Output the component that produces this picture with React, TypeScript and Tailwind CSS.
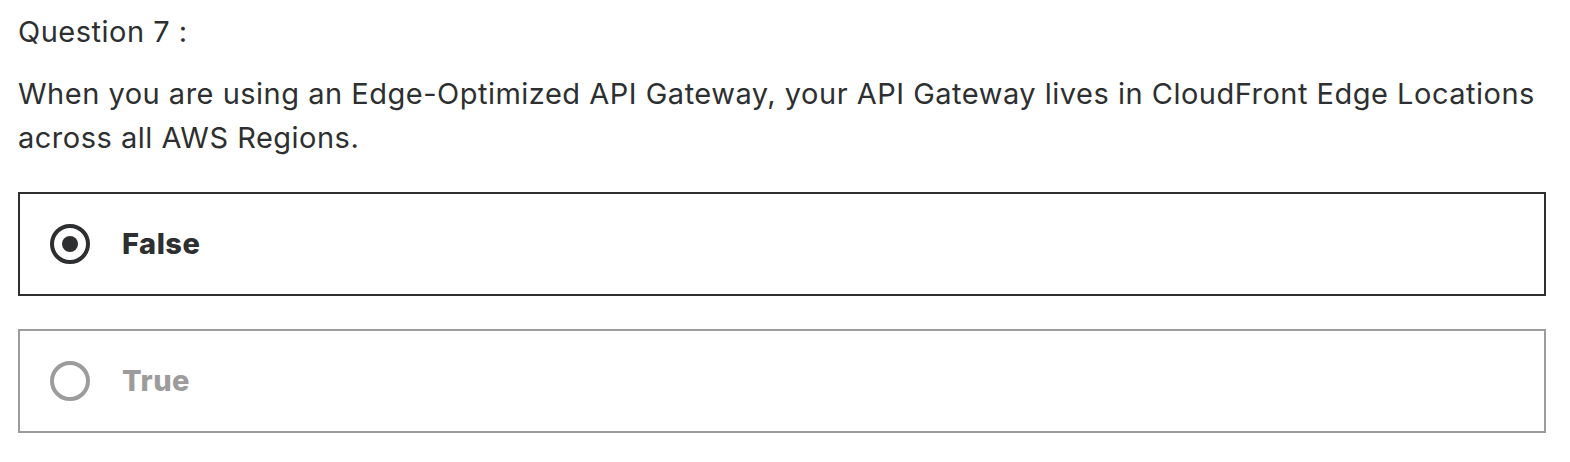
import React, { useState } from "react";

const options = ["False", "True"];

const App: React.FC = () => {
    const [selected, setSelected] = useState("False");

    return (
        <div className="bg-white min-h-screen px-[18px] pt-[14px] text-[#2d2f31] tracking-[0.5px]" style={{ fontFamily: "Inter, 'Noto Sans', sans-serif" }}>
            <div className="text-[29px] leading-[36px]">Question 7 :</div>
            <p className="mt-[22px] text-[29px] leading-[44px]">
                When you are using an Edge-Optimized API Gateway, your API Gateway lives in CloudFront Edge Locations across all AWS Regions.
            </p>
            <div className="mt-[32px] flex flex-col gap-[33px] w-[1528px]">
                {options.map((opt) => {
                    const active = selected === opt;
                    return (
                        <button
                            key={opt}
                            onClick={() => setSelected(opt)}
                            className={
                                active
                                    ? "h-[104px] border-2 border-[#2d2f31] flex items-center pl-[30px] text-left"
                                    : "h-[104px] border-2 border-[#9c9c9c] flex items-center pl-[30px] text-left"
                            }
                        >
                            <span
                                className={
                                    active
                                        ? "w-[40px] h-[40px] rounded-full border-4 border-[#2d2f31] flex items-center justify-center"
                                        : "w-[40px] h-[40px] rounded-full border-4 border-[#9c9c9c] flex items-center justify-center"
                                }
                            >
                                {active && <span className="w-[16px] h-[16px] rounded-full bg-[#2d2f31]" />}
                            </span>
                            <span
                                className={
                                    active
                                        ? "ml-[32px] text-[29px] font-extrabold text-[#2d2f31]"
                                        : "ml-[32px] text-[29px] font-extrabold text-[#9c9c9c]"
                                }
                            >
                                {opt}
                            </span>
                        </button>
                    );
                })}
            </div>
        </div>
    );
};

export default App;
